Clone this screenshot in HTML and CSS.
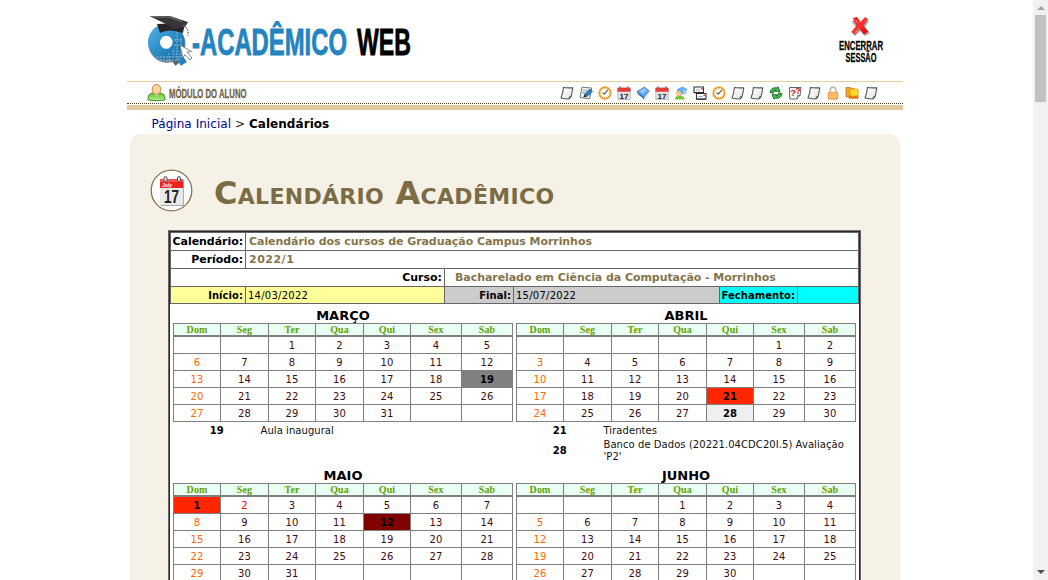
FILE: index.html
```html
<!DOCTYPE html>
<html lang="pt-BR">
<head>
<meta charset="utf-8">
<title>Q-Acadêmico Web - Calendários</title>
<link rel="stylesheet" href="styles.css">
</head>
<body>
<svg width="0" height="0" class="defs">
  <defs>
    <linearGradient id="paper" x1="0" y1="0" x2="1" y2="1"><stop offset="0" stop-color="#fff"/><stop offset="1" stop-color="#e4e4e4"/></linearGradient>
    <linearGradient id="blue" x1="0" y1="0" x2="1" y2="1"><stop offset="0" stop-color="#45a9e0"/><stop offset="1" stop-color="#166fab"/></linearGradient>
    <linearGradient id="redx" x1="0" y1="0" x2="1" y2="1"><stop offset="0" stop-color="#f00"/><stop offset=".5" stop-color="#f33"/><stop offset="1" stop-color="#c00"/></linearGradient>
    <linearGradient id="green" x1="0" y1="0" x2="0" y2="1"><stop offset="0" stop-color="#66bf36"/><stop offset="1" stop-color="#b5ee8a"/></linearGradient>
    <symbol id="note" viewBox="0 0 14 14"><path d="M3.400 1.500Q8 2.200 12.800 1.700 12.300 6 11 10.800L9 13Q5 12.800 1 12Q3 7 3.400 1.500Z" fill="url(#paper)" stroke="#555" stroke-width="1.100" stroke-linejoin="round"/><path d="M9 12.600 9.300 10.800 11 10.600" fill="#aaa" stroke="#444" stroke-width=".8"/></symbol>
    <symbol id="edit" viewBox="0 0 14 14"><path d="M3 1.300 12.600 2 10.600 12.800 1 11.500Z" fill="url(#paper)" stroke="#777"/><path d="m3.500 4 5 .5M3 6.500l3 .3" stroke="#999"/><path d="m5 11 1-3.500 5-4.500 2.500 2.500-5 4.500Z" fill="#2b82c7" stroke="#245982" stroke-width=".7"/><path d="m4.500 11.500 1.200-3 1.800 1.800Z" fill="#222"/></symbol>
    <symbol id="clock" viewBox="0 0 14 14"><circle cx="7" cy="7" r="5.700" fill="#fffdf2" stroke="#e9a332" stroke-width="1.900"/><path d="M9.800 3.800 6.500 8 4.500 6.800" fill="none" stroke="#555" stroke-width="1.100"/><path d="M7 2.500v1M7 10.500v1M2.500 7h1M10.500 7h1" stroke="#aaa" stroke-width=".8"/></symbol>
    <symbol id="cal" viewBox="0 0 14 14"><path d="M.8 2h12.400v11.500H.8Z" fill="#e2e2e2" stroke="#aaa" stroke-width=".7"/><path d="M.5 1.700h13v4H.5Z" fill="#e93838"/><path d="M3 .3v2.400M11 .3v2.400" stroke="#777" stroke-width="1.300"/><text x="7" y="12.700" text-anchor="middle" class="glyph-num">17</text></symbol>
    <symbol id="book" viewBox="0 0 14 14"><path d="M.8 5.500 8.500 1l5 4-5 6.500Z" fill="#5ba4e6" stroke="#4b81bd" stroke-width=".7"/><path d="m.8 5.500 7.700 6v2.200L1.800 8Z" fill="#3473b7"/><path d="m8.500 11.500 5-6.500-.5 3-4.500 5.700Z" fill="#dce7f2"/><path d="m3 5.500 5-3.200 3 2-4 3.500Z" fill="#96caf5"/></symbol>
    <symbol id="student" viewBox="0 0 14 14"><path d="m3 3 6-2.500 2 1.500 2.500 1-3.500 5-6 1Z" fill="#63aee8"/><path d="m9 3 4.500 3.500L10 9" fill="#a3cff0"/><path d="M1 13.500q0-4 4.500-4t5.500 4Z" fill="#77c83f"/><circle cx="5" cy="7.500" r="2.500" fill="#ffd08a" stroke="#c88b4a" stroke-width=".5"/></symbol>
    <symbol id="mail" viewBox="0 0 14 14"><path d="M1 1h9.500v5.500H1ZM3.500 7.500H13V13H3.500Z" fill="#fff" stroke="#333" stroke-width="1.100"/><path d="M3 4h4M5.500 10.500h4" stroke="#86a1ca"/><path d="M8.300 2.500h1v.7h-1Zm2.500 6.500h1v.7h-1Z" fill="#d22" stroke="#d22" stroke-width=".7"/><path d="M1 6.800h9.500M3.500 13.200H13" stroke="#222"/></symbol>
    <symbol id="sync" viewBox="0 0 14 14"><path d="M1 6.500Q2 1 7.500 1.800L9 .7l2 4.800-5.500-.3 1.200-1.200Q4.500 4 4.200 7.200ZM13 7.500q-1 5.500-6.500 4.700L5 13.300 3 8.500l5.500.3L7.300 10q2.200 0 2.500-3.200Z" fill="#46b64c" stroke="#147327" stroke-width=".9"/></symbol>
    <symbol id="help" viewBox="0 0 14 14"><path d="M1.500 1.500h11.500l-1 8-3 3.500H1.800Z" fill="#f7f7f7" stroke="#666"/><path d="m9 13 .5-3.500h3" fill="#bbb" stroke="#555" stroke-width=".7"/><text x="2.500" y="9.500" class="glyph-help">?</text><text x="7.300" y="7.500" class="glyph-help">?</text></symbol>
    <symbol id="lock" viewBox="0 0 14 14"><path d="M4.200 7V4q0-2.800 2.800-2.800T9.800 4v3" fill="none" stroke="#bbb" stroke-width="1.700"/><rect x="2" y="6.300" width="10" height="7" rx="1" fill="#ffb25d" stroke="#e79a4d" stroke-width=".7"/><path d="M3 8.500h8M3 10.500h8" stroke="#ffc582" stroke-width=".7"/></symbol>
    <symbol id="folders" viewBox="0 0 14 14"><path d="M1 1.500h4.500l1 1H9V11H1Z" fill="#f3a620" stroke="#cc7318" stroke-width=".8"/><path d="M3 9.500h10.500v3.300H4Z" fill="#e67919"/><path d="M5 3h6.500l1.700.7L13 10H5.500Z" fill="#ffda2b" stroke="#d8941b" stroke-width=".8"/></symbol>
  </defs>
</svg>

<div class="shell">
  <div class="page">
    <header class="header">
      <svg class="logo" width="270" height="60" viewBox="145 10 270 60" role="img" aria-label="Q-Acadêmico Web">
        <ellipse cx="167" cy="44" rx="13" ry="13.500" fill="none" stroke="#51697a" stroke-width="11" opacity=".75"/>
        <path d="m171 52 8 11" stroke="#51697a" stroke-width="9"/>
        <ellipse cx="166.300" cy="42.300" rx="12.300" ry="12.500" fill="#fff" stroke="url(#blue)" stroke-width="12"/>
        <path d="m174 49 8 12" stroke="#2583ba" stroke-width="7" stroke-linecap="square"/>
        <path d="M157 57h25M160 60h20M177 32v28M173 50v9M169 53v8M181 38v19M174 40h9M174 45h9" stroke="#8bb7cf" stroke-width="1" stroke-dasharray="2 1" fill="none"/>
        <path d="m157 24 3 9q9-5 23 0l2-10Z" fill="#292426"/>
        <path d="m149.500 16.300 20.500-.3 18 6-3 5-10 2-11-6Z" fill="#393639"/>
        <path d="m152 17 17 0 13 4.500" stroke="#777" fill="none"/>
        <path d="M183 25q6 3 5 11" fill="none" stroke="#8a7856" stroke-width="1.200" stroke-dasharray="2 1"/>
        <path d="m180 45 11.500 6.500-4.500.5 5 6-2 2-5-5.500-2 3.500Z" fill="#fff" stroke="#777" stroke-width=".9"/>
        <text x="192" y="55" textLength="155" lengthAdjust="spacingAndGlyphs" class="logo-name">-ACADÊMICO</text>
        <text x="357" y="55" textLength="54" lengthAdjust="spacingAndGlyphs" class="logo-web">WEB</text>
      </svg>
      <a class="logout">
        <svg width="50" height="52" viewBox="836 14 50 52">
          <path d="m854 19 6 4 5-4 4 2-4 6 5 6-5 3-5-5-5 5-4-4 5-5-4-5Z" fill="#766" opacity=".6"/>
          <path d="m853 18 4-1 3.500 5 4.500-5 3 2-4.500 6.500 4.500 6-4 3-4.500-5.500-4.500 5.500-3.500-2.500 5-6.500Z" fill="url(#redx)"/>
          <path d="m855 19 3 4M859 28l-4 5" stroke="#ff9c90" stroke-width="1"/>
          <text x="839" y="49.500" textLength="44" lengthAdjust="spacingAndGlyphs" class="logout-text">ENCERRAR</text>
          <text x="845.500" y="61.500" textLength="31" lengthAdjust="spacingAndGlyphs" class="logout-text">SESSÃO</text>
        </svg>
      </a>
    </header>

    <div class="toolbar">
      <svg class="module" width="104" height="20" viewBox="146 83 104 20">
        <path d="M148 98.500Q148 93 154 93h5q6 0 6 5.500v1.500q-8 1.500-17 0Z" fill="url(#green)" stroke="#439522"/>
        <path d="m153.500 93 3 3 3-3" fill="#e9ffe0"/>
        <ellipse cx="156.500" cy="89.500" rx="4.300" ry="5" fill="#ffd4a0" stroke="#c8833a"/>
        <text x="169" y="98" textLength="77.500" lengthAdjust="spacingAndGlyphs" class="module-text">MÓDULO DO ALUNO</text>
      </svg>
      <div class="tools">
        <svg><use href="#note"/></svg><svg><use href="#edit"/></svg><svg><use href="#clock"/></svg><svg><use href="#cal"/></svg><svg><use href="#book"/></svg><svg><use href="#cal"/></svg><svg><use href="#student"/></svg><svg><use href="#mail"/></svg><svg><use href="#clock"/></svg><svg><use href="#note"/></svg><svg><use href="#note"/></svg><svg><use href="#sync"/></svg><svg><use href="#help"/></svg><svg><use href="#note"/></svg><svg><use href="#lock"/></svg><svg><use href="#folders"/></svg><svg><use href="#note"/></svg>
      </div>
    </div>
    <div class="band"></div>

    <nav class="crumbs"><a>Página Inicial</a> &gt; <b>Calendários</b></nav>

    <main class="panel">
      <div class="heading">
        <svg width="44" height="44" viewBox="0 0 44 44">
          <circle cx="21.500" cy="21.500" r="20.300" fill="#fff" stroke="#85754d" stroke-width="1.300"/>
          <path d="M10.500 11h23.500v26h-23.500Z" fill="#aaa"/><path d="M10 10h23v26H10Z" fill="#e9e9e9"/>
          <path d="M10 10h23v9H10Z" fill="#ee2020"/><path d="M10 10h23v3H10Z" fill="#f45252"/>
          <text x="12" y="18" class="july">July</text>
          <g fill="#ddd" stroke="#555"><rect x="14" y="7.500" width="3" height="5" rx="1.400"/><rect x="27.500" y="7.500" width="3" height="5" rx="1.400"/></g>
          <text x="21.500" y="34" text-anchor="middle" textLength="15" lengthAdjust="spacingAndGlyphs" class="big17">17</text>
        </svg>
        <h1>Calendário Acadêmico</h1>
      </div>

      <section class="sheet">
        <div class="row row-a"><div class="label">Calendário:</div><div class="value">Calendário dos cursos de Graduação Campus Morrinhos</div></div>
        <div class="row row-a"><div class="label">Período:</div><div class="value period">2022/1</div></div>
        <div class="row row-c"><div class="label">Curso:</div><div class="value course">Bacharelado em Ciência da Computação - Morrinhos</div></div>
        <div class="row row-d">
          <div class="label yellow">Início:</div><div class="date yellow">14/03/2022</div>
          <div class="label gray">Final:</div><div class="date gray">15/07/2022</div>
          <div class="label cyan">Fechamento:</div><div class="date cyan"></div>
        </div>
        <div class="months" id="months"></div>
      </section>
    </main>
  </div>
</div>
<div class="scrollbar"><i class="up"></i><i class="thumb"></i><i class="down"></i></div>
<script src="calendar.js"></script>
</body>
</html>
```
FILE: styles.css
```css
* { box-sizing: border-box; }
body {
  margin: 0;
  height: 580px;
  overflow: hidden;
  display: flex;
  background: #fff;
  color: #000;
  font-family: "DejaVu Sans", Verdana, sans-serif;
}
.defs { position: absolute; }
.shell { width: 1033px; height: 580px; overflow: hidden; padding-left: 127px; }
.page { width: 776px; }

.header { height: 81px; display: flex; justify-content: space-between; padding: 10px 17px 0 18px; }
.header svg, .toolbar svg { overflow: visible; }
.logout { padding-top: 4px; }
.logo-name, .logo-web { font: bold 36px "Liberation Sans", Arial, sans-serif; }
.logo-name { fill: #2484c2; stroke: #2484c2; stroke-width: .8px; }
.logo-web { fill: #000; stroke: #000; stroke-width: .8px; }
.logout-text { font: bold 12.500px "Liberation Sans", Arial, sans-serif; stroke: #000; stroke-width: .3px; }

.toolbar {
  height: 23px;
  border-top: 1px solid #dfcfa5;
  border-bottom: 1px dotted #4a3c20;
  display: flex;
  justify-content: space-between;
  padding: 1px 25px 0 19px;
}
.module-text { font: bold 12px "Liberation Sans", Arial, sans-serif; fill: #736541; stroke: #736541; stroke-width: .3px; }
.tools { display: flex; gap: 5px; padding-top: 3px; }
.tools svg { width: 14px; height: 14px; }
.glyph-num { font: bold 8px "Liberation Sans", sans-serif; fill: #222; }
.glyph-help { font: bold 9px "Liberation Sans", sans-serif; fill: #d01020; }
.band { height: 5px; margin-top: 1px; background: #e1cc9f; }

.crumbs { height: 24px; padding: 6px 0 0 24.500px; font-size: 12px; letter-spacing: .05px; line-height: 16px; color: #222; white-space: nowrap; }
.crumbs a { color: #00008b; }
.crumbs b { color: #000; }

.panel { width: 770px; margin-left: 3px; height: 460px; border-radius: 11px 11px 0 0; background: #f5f1e6; padding: 35px 0 0 38px; }
.heading { display: flex; height: 61px; margin-left: -18px; }
.heading svg { flex: none; }
.july { font: italic bold 5px "Liberation Sans", sans-serif; fill: #fff; }
.big17 { font: bold 19px "Liberation Sans", sans-serif; fill: #222; }
h1 { margin: 4px 0 0 20px; font-size: 32px; letter-spacing: .3px; line-height: 40px; font-variant: small-caps; color: #7b6c46; white-space: nowrap; }

.sheet { width: 693px; height: 600px; background: #fff; border: 1px solid #666; border-top-color: #777; box-shadow: inset 0 0 0 1px #282a30; padding: 1px 1px 0 1px; font-size: 11px; }
.row { display: grid; border: 1px solid #666; border-top: 0; height: 18px; line-height: 18px; white-space: nowrap; }
.row:first-child { border-top: 1px solid #666; height: 19px; }
.row > div { height: 100%; }
.row > div + div { border-left: 1px solid #666; }
.row-a { grid-template-columns: 74px 1fr; }
.row-c { grid-template-columns: 273px 1fr; }
.row-d { grid-template-columns: 74px 199px 69px 206px 78px 1fr; grid-template-rows: 16px; height: 17px; line-height: 17px; }
.label { text-align: right; padding-right: 2px; font-weight: bold; }
.row-a .label { letter-spacing: -.05px; }
.row-d .label { font-size: 10px; letter-spacing: .05px; }
.value { font-weight: bold; color: #85754d; padding-left: 3px; letter-spacing: -.06px; }
.period { letter-spacing: .5px; }
.course { padding-left: 10px; }
.date { font-size: 10px; letter-spacing: .25px; padding-left: 2px; }
.yellow { background: #ff9; }
.gray { background: #ccc; }
.cyan { background: #0ff; }

.months { display: grid; grid-template-columns: 340px 340px; column-gap: 3px; padding-left: 3px; }
.month { height: 160px; }
.month h2 { margin: 0; height: 19px; padding-top: 4px; font-size: 13px; line-height: 15px; text-align: center; }
.days { display: grid; grid-template-columns: 47px 48px 47px 48px 47px 51px 51px; grid-template-rows: 13px; grid-auto-rows: 17px; border-left: 1px solid #808080; border-top: 1px solid #808080; text-align: center; }
.days > div { border-right: 1px solid #808080; border-bottom: 1px solid #808080; font-size: 10px; letter-spacing: .25px; line-height: 17px; color: #3d0c11; }
.days > .wd { border-bottom-width: 2px; background: #eafff4; color: #61a000; font: bold 10px/12px "Liberation Serif", "Times New Roman", serif; letter-spacing: .1px; }
.days > .sun { color: #f60; }
.days > .holiday { color: #f00; }
.days > .mark-gray, .days > .mark-red, .days > .mark-exam, .days > .mark-maroon { color: #000; font-weight: bold; letter-spacing: 0; }
.days > .mark-gray { background: #808080; }
.days > .mark-red { background: #ff2600; }
.days > .mark-exam { background: #efefef; }
.days > .mark-maroon { background: #800000; }
.notes { padding-top: 2px; }
.note { display: grid; grid-template-columns: 87.500px 1fr; align-items: center; font-size: 10px; letter-spacing: .06px; line-height: 12px; min-height: 14px; color: #111; }
.note + .note { padding-top: 1px; }
.note b { text-align: center; letter-spacing: 0; color: #000; }

.scrollbar { width: 15px; height: 580px; background: #f1f1f1; display: flex; flex-direction: column; align-items: center; }
.up { border: 4px solid transparent; border-top: 0; border-bottom: 4px solid #a3a3a3; margin: 6px 0 5px; }
.thumb { width: 11px; height: 87px; background: #c1c1c1; }
.down { border: 4px solid transparent; border-bottom: 0; border-top: 4px solid #505050; margin: auto 0 6px; }
```
FILE: calendar.js
```js
const months = [
  { name: 'MARÇO', start: 2, days: 31, marks: { 19: 'mark-gray' }, notes: [[19, 'Aula inaugural']] },
  { name: 'ABRIL', start: 5, days: 30, marks: { 21: 'mark-red', 28: 'mark-exam' },
    notes: [[21, 'Tiradentes'], [28, "Banco de Dados (20221.04CDC20I.5) Avaliação 'P2'"]] },
  { name: 'MAIO', start: 0, days: 31, marks: { 1: 'mark-red', 2: 'holiday', 12: 'mark-maroon' }, notes: [] },
  { name: 'JUNHO', start: 3, days: 30, marks: {}, notes: [] }
];
const weekdays = ['Dom', 'Seg', 'Ter', 'Qua', 'Qui', 'Sex', 'Sab'];

document.getElementById('months').innerHTML = months.map(m => {
  let cells = weekdays.map(d => `<div class="wd">${d}</div>`).join('');
  for (let i = 0; i < 35; i++) {
    const day = i - m.start + 1;
    const shown = day > 0 && day <= m.days;
    const cls = [i % 7 === 0 ? 'sun' : '', shown && m.marks[day] || ''].join(' ').trim();
    cells += `<div class="${cls}">${shown ? day : ''}</div>`;
  }
  const notes = m.notes.map(n => `<div class="note"><b>${n[0]}</b><span>${n[1]}</span></div>`).join('');
  return `<article class="month"><h2>${m.name}</h2><div class="days">${cells}</div><div class="notes">${notes}</div></article>`;
}).join('');
```
